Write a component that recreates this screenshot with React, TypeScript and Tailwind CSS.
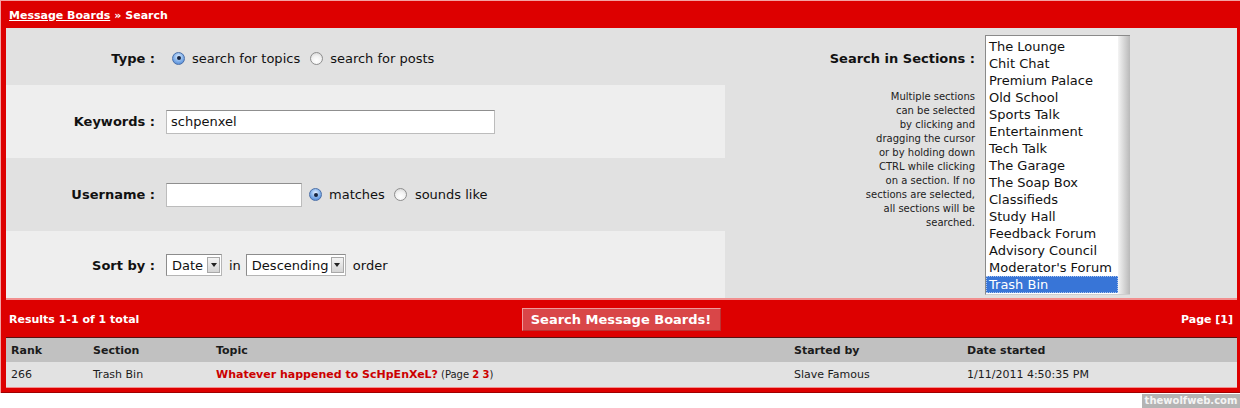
import React from "react";

const sections = [
  "The Lounge",
  "Chit Chat",
  "Premium Palace",
  "Old School",
  "Sports Talk",
  "Entertainment",
  "Tech Talk",
  "The Garage",
  "The Soap Box",
  "Classifieds",
  "Study Hall",
  "Feedback Forum",
  "Advisory Council",
  "Moderator's Forum",
  "Trash Bin",
];

const helpLines = [
  "Multiple sections",
  "can be selected",
  "by clicking and",
  "dragging the cursor",
  "or by holding down",
  "CTRL while clicking",
  "on a section. If no",
  "sections are selected,",
  "all sections will be",
  "searched.",
];

const Radio = ({ on }: { on?: boolean }) =>
  on ? (
    <span className="w-[13px] h-[13px] rounded-full border border-[#4a6fa8] bg-[radial-gradient(circle_at_50%_35%,#e4f0ff_0%,#8db8ec_45%,#3d79cf_100%)] flex items-center justify-center shrink-0">
      <span className="w-[4px] h-[4px] rounded-full bg-[#16233d]" />
    </span>
  ) : (
    <span className="w-[13px] h-[13px] rounded-full border border-[#8e8e8e] bg-[radial-gradient(circle_at_50%_70%,#ffffff_0%,#f2f2f2_50%,#cfcfcf_100%)] shrink-0" />
  );

const Select = ({ value, w }: { value: string; w: string }) => (
  <div
    className={
      w +
      " h-[22px] bg-white border border-[#b5b5b5] border-t-[#8c8c8c] border-l-[#8c8c8c] flex items-center justify-between pl-[5px] pr-[1px]"
    }
  >
    <span>{value}</span>
    <span className="w-[13px] h-[16px] bg-linear-to-b from-[#f4f4f4] to-[#d4d4d4] border border-[#a8a8a8] flex items-center justify-center">
      <span className="w-0 h-0 border-l-[3px] border-r-[3px] border-t-[4px] border-l-transparent border-r-transparent border-t-[#222]" />
    </span>
  </div>
);

const Label = ({ text }: { text: string }) => (
  <div className="w-[149px] text-right font-bold">{text}</div>
);

export default function App() {
  return (
    <div className="w-[1240px] h-[408px] bg-white relative font-['DejaVu_Sans',sans-serif] text-[13px] text-[#111] leading-none">
      <div className="h-[393px] bg-[#dd0000] border-t border-l border-[#f3a3a3] pl-[5px] pr-[3px] flex flex-col">
        {/* breadcrumb */}
        <div className="h-[27px] flex items-center pl-[3px] pt-[1px] text-white font-bold text-[11px]">
          <span className="underline">Message Boards</span>
          <span className="ml-[4px]">» Search</span>
        </div>

        {/* form */}
        <div className="h-[270px] flex">
          <div className="w-[719px] flex flex-col">
            <div className="h-[57px] bg-[#e1e1e1] flex items-center pt-[3px]">
              <Label text="Type :" />
              <div className="flex items-center ml-[17px]">
                <Radio on />
                <span className="ml-[7px]">search for topics</span>
                <span className="ml-[10px]" />
                <Radio />
                <span className="ml-[7px]">search for posts</span>
              </div>
            </div>
            <div className="h-[73px] bg-[#eeeeee] flex items-center">
              <Label text="Keywords :" />
              <div className="ml-[11px] w-[329px] h-[24px] bg-white border border-[#bcbcbc] border-t-[#8f8f8f] flex items-center pl-[4px]">
                schpenxel
              </div>
            </div>
            <div className="h-[73px] bg-[#e1e1e1] flex items-center">
              <Label text="Username :" />
              <div className="ml-[11px] w-[136px] h-[24px] bg-white border border-[#bcbcbc] border-t-[#8f8f8f]" />
              <span className="ml-[7px]" />
              <Radio on />
              <span className="ml-[7px]">matches</span>
              <span className="ml-[9px]" />
              <Radio />
              <span className="ml-[8px]">sounds like</span>
            </div>
            <div className="h-[67px] bg-[#eeeeee] flex items-center pt-[1px]">
              <Label text="Sort by :" />
              <div className="ml-[11px] flex items-center">
                <Select value="Date" w="w-[56px]" />
                <span className="ml-[7px]">in</span>
                <span className="ml-[5px]" />
                <Select value="Descending" w="w-[100px]" />
                <span className="ml-[7px]">order</span>
              </div>
            </div>
          </div>

          <div className="flex-1 bg-[#e1e1e1] flex">
            <div className="w-[250px] flex flex-col items-end">
              <div className="mt-[23px] font-bold leading-[16px]">Search in Sections :</div>
              <div className="mt-[23px] text-[10px] leading-[14px] text-right text-[#222]">
                {helpLines.map((l) => (
                  <div key={l}>{l}</div>
                ))}
              </div>
            </div>
            <div className="ml-[10px] mt-[7px] w-[145px] h-[260px] bg-white border-t border-l border-b border-[#8a8a8a] border-b-[#cfcfcf] flex">
              <div className="flex-1 pt-[2px]">
                {sections.map((s) =>
                  s === "Trash Bin" ? (
                    <div
                      key={s}
                      className="h-[17px] leading-[17px] pl-[3px] bg-[#3875d7] text-white outline-1 outline-dotted outline-[#a9c3ee] -outline-offset-1"
                    >
                      {s}
                    </div>
                  ) : (
                    <div key={s} className="h-[17px] leading-[17px] pl-[3px]">
                      {s}
                    </div>
                  )
                )}
              </div>
              <div className="w-[12px] bg-linear-to-r from-[#f4f4f4] to-[#b9b9b9]" />
            </div>
          </div>
        </div>
        <div className="h-[2px] bg-[#f28f8f]" />

        {/* results bar */}
        <div className="h-[37px] flex items-center pt-[1px] text-white font-bold text-[11px]">
          <div className="flex-1 pl-[3px]">Results 1-1 of 1 total</div>
          <button className="w-[199px] h-[23px] bg-[#d94648] border border-[#ef9c9c] border-b-[#b33] border-r-[#b33] text-white font-bold text-[13px] font-['DejaVu_Sans',sans-serif]">
            Search Message Boards!
          </button>
          <div className="flex-1 text-right pr-[4px]">Page [1]</div>
        </div>

        {/* table */}
        <div className="text-[11px]">
          <div className="h-[25px] bg-[#c1c1c1] border-t border-[#5a1010] grid grid-cols-[82px_123px_578px_173px_1fr] items-center font-bold text-[#1b1b1b]">
            <div className="pl-[5px]">Rank</div>
            <div className="pl-[5px]">Section</div>
            <div className="pl-[5px]">Topic</div>
            <div className="pl-[5px]">Started by</div>
            <div className="pl-[5px]">Date started</div>
          </div>
          <div className="h-[25px] bg-[#e2e2e2] grid grid-cols-[82px_123px_578px_173px_1fr] items-center text-[#1b1b1b]">
            <div className="pl-[5px]">266</div>
            <div className="pl-[5px]">Trash Bin</div>
            <div className="pl-[5px] flex items-center">
              <span className="font-bold text-[#cc0000]">Whatever happened to ScHpEnXeL?</span>
              <span className="ml-[3px] text-[10px]">
                (Page <span className="font-bold text-[#cc0000]">2</span>{" "}
                <span className="font-bold text-[#cc0000]">3</span>)
              </span>
            </div>
            <div className="pl-[5px]">Slave Famous</div>
            <div className="pl-[5px]">1/11/2011 4:50:35 PM</div>
          </div>
          <div className="h-[1px] bg-[#f28f8f]" />
        </div>
        <div className="flex-1" />
        <div className="h-[1px] bg-[#a00000] -mx-[5px]" />
      </div>

      <div className="absolute right-0 bottom-0 w-[98px] h-[14px] bg-[#b4b4b4] text-[#f4f4f4] font-bold text-[10px] flex items-center justify-center">
        thewolfweb.com
      </div>
    </div>
  );
}
